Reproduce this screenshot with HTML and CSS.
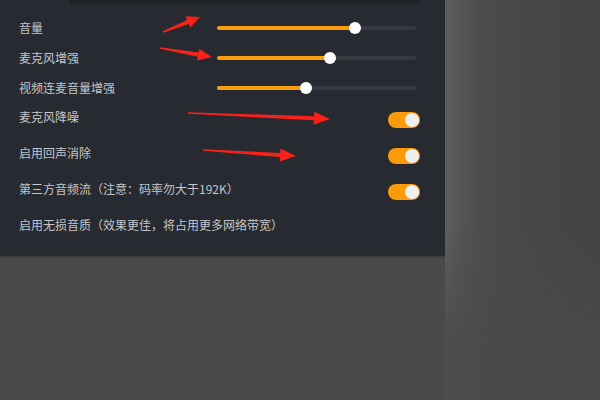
FILE: index.html
```html
<!DOCTYPE html>
<html>
<head>
	<meta charset="utf-8" />
	<meta name="viewport" content="width=device-width, initial-scale=1.0" />
	<title>音频设置</title>
	<link rel="stylesheet" href="styles.css">
</head>
<body>
	<div class="screen">
		<section class="panel">
			<div class="panel-top"></div>
			<div class="rows">
				<div class="row row--slider">
					<span class="label">音量</span>
					<div class="slider"><div class="slider-fill" style="width:69%"><span class="slider-thumb"></span></div></div>
				</div>
				<div class="row row--slider">
					<span class="label">麦克风增强</span>
					<div class="slider"><div class="slider-fill" style="width:56.5%"><span class="slider-thumb"></span></div></div>
				</div>
				<div class="row row--slider row--last-slider">
					<span class="label">视频连麦音量增强</span>
					<div class="slider"><div class="slider-fill" style="width:44.5%"><span class="slider-thumb"></span></div></div>
				</div>
				<div class="toggles">
					<div class="row row--switch">
						<span class="label">麦克风降噪</span>
						<span class="switch is-on"></span>
					</div>
					<div class="row row--switch">
						<span class="label">启用回声消除</span>
						<span class="switch is-on"></span>
					</div>
					<div class="row row--switch">
						<span class="label">第三方音频流（注意：码率勿大于192K）</span>
						<span class="switch is-on"></span>
					</div>
					<div class="row row--switch">
						<span class="label">启用无损音质（效果更佳，将占用更多网络带宽）</span>
					</div>
				</div>
			</div>
		</section>
		<div class="backdrop"></div>

		<!-- red pointer arrows drawn on top of the settings -->
		<svg class="marks" width="600" height="400" viewBox="0 0 600 400">
			<polygon points="163.3,32.7 188.8,23.9 190.2,27.5 200,17 185.7,16.3 187.1,19.9 162.7,31.3" />
			<polygon points="160.1,47.2 198.6,52.4 199.2,48.7 212,57 197.2,60.5 197.8,56.8 159.9,48.8" />
			<polygon points="188.0,112.2 314.1,116.3 314.3,111.8 330,119 313.7,124.8 313.9,120.3 188.0,113.8" />
			<polygon points="203.0,149.2 280.2,153.0 280.5,148.5 296,156 279.6,161.5 279.9,157.0 203.0,150.8" />
		</svg>
	</div>
</body>
</html>
```

FILE: styles.css
```css
body {
	margin: 0;
	background: #4a4a4a;
	font: 12px/16px "Noto Sans CJK SC", "Microsoft YaHei", sans-serif;
	color: #c4c6c9;
}
.screen {
	position: relative;
	display: flex;
	width: 600px;
	height: 400px;
	overflow: hidden;
}
.panel {
	width: 445px;
	height: 256px;
	flex: 0 0 auto;
	background: #272a31;
	box-shadow: 0 1px 2px rgba(0, 0, 0, .25);
}
.panel-top {
	height: 4px;
	margin: 0 25px 0 70px;
	background: #1f2227;
}
.rows {
	padding: 9px 25px 0 19px;
}
.row {
	display: flex;
	align-items: center;
}
.row--slider { height: 30px; }
.row--last-slider { height: 29px; }
.row--switch { height: 36px; }
.toggles { margin-top: -3px; }
.label {
	flex: 1 1 auto;
	white-space: nowrap;
}

/* slider */
.slider {
	width: 200px;
	height: 4px;
	margin-right: 3px;
	border-radius: 2px;
	background: #353941;
}
.slider-fill {
	position: relative;
	height: 100%;
	border-radius: 2px;
	background: #fa9d0e;
}
.slider-thumb {
	position: absolute;
	right: -6px;
	top: -4px;
	width: 12px;
	height: 12px;
	border-radius: 50%;
	background: #fff;
}

/* switch */
.switch {
	position: relative;
	flex: 0 0 auto;
	width: 32px;
	height: 16px;
	margin-top: 5px;
	border-radius: 8px;
	background: #4b4f57;
}
.switch.is-on { background: #fb9b0a; }
.switch::after {
	content: "";
	position: absolute;
	top: 1px;
	left: 1px;
	width: 14px;
	height: 14px;
	border-radius: 50%;
	background: #efefef;
}
.switch.is-on::after {
	left: auto;
	right: 1px;
}

/* blurred area beside the panel: light edge that fades downwards */
.backdrop {
	flex: 1 1 auto;
	background:
		linear-gradient(to bottom, rgba(74, 74, 74, 0) 55%, rgba(74, 74, 74, .85) 85%),
		linear-gradient(to right, #5e6060 0, #545555 15px, #4b4b4b 40px, #464646 100px, #434343 155px);
}
.marks {
	position: absolute;
	left: 0;
	top: 0;
	fill: #f8221a;
}
```
